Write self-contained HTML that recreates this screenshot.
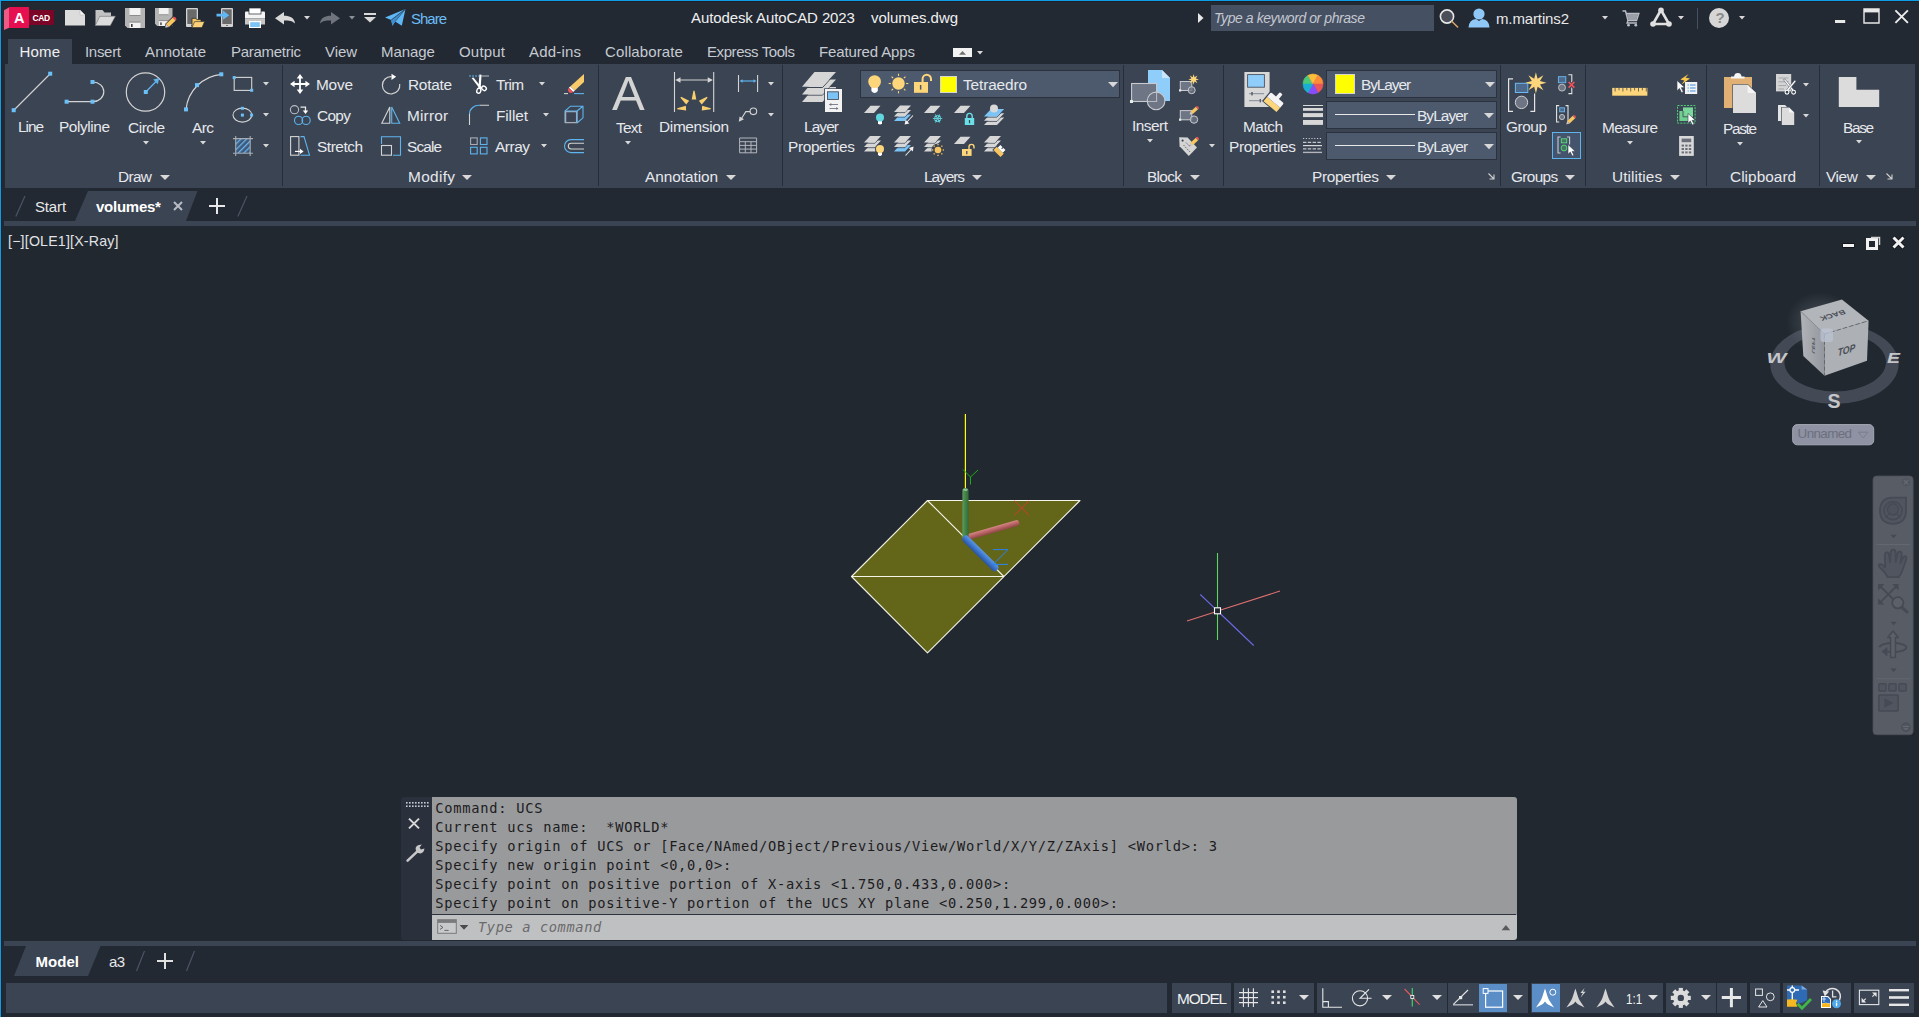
<!DOCTYPE html>
<html lang="en">
<head>
<meta charset="utf-8">
<title>Autodesk AutoCAD 2023 - volumes.dwg</title>
<style>
html,body{margin:0;padding:0;background:#222933;}
body{width:1919px;height:1017px;overflow:hidden;position:relative;font-family:"Liberation Sans",sans-serif;}
#app{position:absolute;left:0;top:0;width:1919px;height:1017px;overflow:hidden;background:#222933;}
.b{position:absolute;}
.t{position:absolute;white-space:pre;line-height:20px;font-family:"Liberation Sans",sans-serif;}
.m{font-family:"DejaVu Sans Mono","Liberation Mono",monospace;}
.i{position:absolute;overflow:visible;}
</style>
</head>
<body>
<div id="app">
<div class="b" style="left:2px;top:226px;width:1917px;height:715px;background:#212830;"></div>
<div class="b" style="left:0px;top:1px;width:1919px;height:1px;background:#1e2129;"></div>
<div class="b" style="left:1px;top:1px;width:1px;height:1016px;background:#1e2129;"></div>
<div class="b" style="left:0px;top:0px;width:1919px;height:1px;background:#0c9fe8;"></div>
<div class="b" style="left:0px;top:0px;width:1px;height:1017px;background:#0c9fe8;"></div>
<div class="b" style="left:8px;top:39px;width:64px;height:26px;background:#3b4453;"></div>
<div class="b" style="left:5px;top:64px;width:1910px;height:124px;background:#3b4453;"></div>
<div class="b" style="left:282px;top:65px;width:1px;height:121px;background:#262d38;"></div>
<div class="b" style="left:598px;top:65px;width:1px;height:121px;background:#262d38;"></div>
<div class="b" style="left:782px;top:65px;width:1px;height:121px;background:#262d38;"></div>
<div class="b" style="left:1123px;top:65px;width:1px;height:121px;background:#262d38;"></div>
<div class="b" style="left:1223px;top:65px;width:1px;height:121px;background:#262d38;"></div>
<div class="b" style="left:1500px;top:65px;width:1px;height:121px;background:#262d38;"></div>
<div class="b" style="left:1585px;top:65px;width:1px;height:121px;background:#262d38;"></div>
<div class="b" style="left:1706px;top:65px;width:1px;height:121px;background:#262d38;"></div>
<div class="b" style="left:1819px;top:65px;width:1px;height:121px;background:#262d38;"></div>
<div class="b" style="left:4px;top:221px;width:1912px;height:5px;background:#3b4453;"></div>
<svg class="i" style="left:0;top:191px" width="260" height="30"><path d="M88 0H197.5L186 30H75Z" fill="#3b4453"/><path d="M15.8 25.4L25 5M237.8 25.4L247 5" stroke="#4a5466" stroke-width="1.2" fill="none"/></svg>
<div class="b" style="left:4px;top:941px;width:1912px;height:5px;background:#3b4453;"></div>
<svg class="i" style="left:0;top:946px" width="260" height="30"><path d="M26 0H100.5L88 30H14Z" fill="#3b4453"/><path d="M136.5 25L144.5 5M186.5 25L194.5 5" stroke="#4a5466" stroke-width="1.2" fill="none"/></svg>
<div class="b" style="left:6px;top:983px;width:1161px;height:30px;background:#3b4453;"></div>
<div class="b" style="left:1172px;top:983px;width:59px;height:30px;background:#3b4453;"></div>
<div class="b" style="left:1234px;top:983px;width:80px;height:30px;background:#3b4453;"></div>
<div class="b" style="left:1317px;top:983px;width:130px;height:30px;background:#3b4453;"></div>
<div class="b" style="left:1448px;top:983px;width:80px;height:30px;background:#3b4453;"></div>
<div class="b" style="left:1531px;top:983px;width:132px;height:30px;background:#3b4453;"></div>
<div class="b" style="left:1666px;top:983px;width:50px;height:30px;background:#3b4453;"></div>
<div class="b" style="left:1717px;top:983px;width:30px;height:30px;background:#3b4453;"></div>
<div class="b" style="left:1750px;top:983px;width:30px;height:30px;background:#3b4453;"></div>
<div class="b" style="left:1783px;top:983px;width:68px;height:30px;background:#3b4453;"></div>
<div class="b" style="left:1854px;top:983px;width:60px;height:30px;background:#3b4453;"></div>
<div class="b" style="left:1479px;top:984px;width:28px;height:28px;background:#5b8ec6;"></div>
<div class="b" style="left:1532px;top:984px;width:28px;height:28px;background:#5b8ec6;"></div>
<span class="t" style="left:411.00px;top:8.80px;font-size:15px;color:#6cbcf5;letter-spacing:-1.000px;">Share</span>
<span class="t" style="left:691.00px;top:7.80px;font-size:15px;color:#f0f0f0;letter-spacing:-0.100px;">Autodesk AutoCAD 2023</span>
<span class="t" style="left:871.00px;top:7.80px;font-size:15px;color:#f0f0f0;letter-spacing:-0.050px;">volumes.dwg</span>
<div class="b" style="left:1211px;top:5px;width:223px;height:26px;background:#465063;"></div>
<span class="t" style="left:1214.00px;top:7.65px;font-size:14px;color:#c4c8cf;letter-spacing:-0.429px;font-style:italic;">Type a keyword or phrase</span>
<span class="t" style="left:1496.00px;top:8.80px;font-size:15px;color:#e8e8e8;letter-spacing:-0.125px;">m.martins2</span>
<div class="b" style="left:1697px;top:8px;width:1px;height:21px;background:#465063;"></div>
<svg class="i" style="left:0px;top:0px;" width="60" height="36" viewBox="0 0 60 36"><path d="M4 10.3L9 7.4V27.8L4 30Z" fill="#ec5b85"/><rect x="29" y="10" width="25" height="15" fill="#7a0526"/><rect x="9" y="7" width="20" height="21" fill="#e61050"/></svg>
<span class="t" style="left:14.00px;top:8.18px;font-size:14.5px;color:#ffffff;font-weight:700;">A</span>
<span class="t" style="left:32.50px;top:7.65px;font-size:8.5px;color:#ffffff;letter-spacing:-0.438px;font-weight:700;">CAD</span>
<svg class="i" style="left:65px;top:10px;" width="20" height="16" viewBox="0 0 20 16"><path d="M0 0H15L20 5V15.5H0Z" fill="#dcdcdc"/><path d="M15 0L20 5H15Z" fill="#f6f6f6"/><path d="M15 0V5H20" fill="none" stroke="#b8b8b8" stroke-width="0.6"/></svg>
<svg class="i" style="left:95px;top:9px;" width="21" height="17" viewBox="0 0 21 17"><path d="M0.5 16V1H7.5L9.5 3.5H16V7H5Z" fill="#c2c2c2"/><path d="M4.8 7.2H20.3L15.3 16.5H0.3Z" fill="#dcdcdc" stroke="#8a8a8a" stroke-width="0.5"/></svg>
<svg class="i" style="left:125px;top:8px;" width="20" height="20" viewBox="0 0 20 20"><g transform="translate(0,0) scale(1.0,1.0)"><path d="M0 0H20V20H2.5L0 17.5Z" fill="#b4b4b4"/><rect x="4.5" y="0" width="11" height="7.5" fill="#f2f2f2"/><rect x="4.5" y="7" width="11" height="1" fill="#8c8c8c"/><rect x="4.5" y="14.5" width="11" height="5.5" fill="#f2f2f2"/><rect x="4.5" y="13.5" width="11" height="1" fill="#8c8c8c"/><rect x="6" y="16" width="1.6" height="3" fill="#3a3a3a"/></g></svg>
<svg class="i" style="left:155px;top:8px;" width="21" height="21" viewBox="0 0 21 21"><g transform="translate(0,0) scale(0.875,0.9)"><path d="M0 0H20V20H2.5L0 17.5Z" fill="#b4b4b4"/><rect x="4.5" y="0" width="11" height="7.5" fill="#f2f2f2"/><rect x="4.5" y="7" width="11" height="1" fill="#8c8c8c"/><rect x="4.5" y="14.5" width="11" height="5.5" fill="#f2f2f2"/><rect x="4.5" y="13.5" width="11" height="1" fill="#8c8c8c"/><rect x="6" y="16" width="1.6" height="3" fill="#3a3a3a"/></g><path d="M9 21L10.6 15.6L18.6 7.6L23 12L15 20Z" fill="#222933"/><g transform="translate(10 19.8) rotate(-43.9)"><path d="M0 0L3.4 -2.1V2.1Z" fill="#c8c8c8"/><path d="M0 0L1.3 -0.6V0.6Z" fill="#555"/><rect x="3.4" y="-2.1" width="9.39" height="4.2" fill="#f7c661"/><path d="M12.79 -2.1H13.99Q15.59 0 13.99 2.1H12.79Z" fill="#f0525a"/></g></svg>
<svg class="i" style="left:185px;top:8px;" width="21" height="21" viewBox="0 0 21 21"><rect x="1" y="0" width="12" height="19" rx="1" fill="#d2d2d2"/><rect x="2.3" y="1.3" width="9.4" height="14.7" fill="#6a6a6a"/><rect x="6.0" y="17" width="2" height="1" fill="#7a7a7a"/><path d="M7 19.5V10.3H10.8L11.8 11.6H16V13.5" fill="#f7c661" stroke="#222933" stroke-width="0.8"/><path d="M9.6 13.6H19.6L17 19.6H7Z" fill="#fbd27a" stroke="#222933" stroke-width="0.6"/></svg>
<svg class="i" style="left:215px;top:8px;" width="21" height="21" viewBox="0 0 21 21"><rect x="6" y="0" width="12" height="19" rx="1" fill="#d2d2d2"/><rect x="7.3" y="1.3" width="9.4" height="14.7" fill="#6a6a6a"/><rect x="11.0" y="17" width="2" height="1" fill="#7a7a7a"/><path d="M1.5 5.8H8V2.6L14.2 7.2L8 11.8V8.6H1.5Z" fill="#5fb8f5"/></svg>
<svg class="i" style="left:245px;top:8px;" width="20" height="20" viewBox="0 0 20 20"><rect x="4" y="0" width="12" height="7" rx="0.8" fill="#ffffff"/><path d="M0 4.5Q0 3.5 1 3.5H19Q20 3.5 20 4.5V10.5H0Z" fill="#f4f4f4"/><rect x="4" y="0" width="12" height="6" fill="#ffffff" stroke="#222933" stroke-width="0.7"/><rect x="0" y="10.5" width="20" height="6" fill="#c6c6c6"/><rect x="4" y="13" width="12" height="7" fill="#ffffff"/><rect x="5.2" y="14.2" width="9.6" height="4.8" fill="#7cc4f5"/></svg>
<svg class="i" style="left:275px;top:12px;" width="20" height="13" viewBox="0 0 20 13"><path d="M0 6.2L9 0V3.8C15 3.8 19.5 6 20 11.6C17.5 8.6 14 8.4 9 8.4V12.4Z" fill="#d8d8d8"/></svg>
<svg class="i" style="left:304px;top:16px;" width="6" height="3.5" viewBox="0 0 6 3.5"><path d="M0 0H6L3.0 3.5Z" fill="#d8d8d8"/></svg>
<svg class="i" style="left:320px;top:12px;" width="20" height="13" viewBox="0 0 20 13"><path d="M0 6.2L9 0V3.8C15 3.8 19.5 6 20 11.6C17.5 8.6 14 8.4 9 8.4V12.4Z" fill="#6e737c" transform="translate(20,0) scale(-1,1)"/></svg>
<svg class="i" style="left:349px;top:16px;" width="6" height="3.5" viewBox="0 0 6 3.5"><path d="M0 0H6L3.0 3.5Z" fill="#8a8f98"/></svg>
<svg class="i" style="left:364px;top:13px;" width="12" height="10" viewBox="0 0 12 10"><rect x="0" y="0" width="12" height="2" fill="#d8d8d8"/><path d="M0 4H12L6 9.5Z" fill="#d8d8d8"/></svg>
<svg class="i" style="left:385px;top:9px;" width="21" height="18" viewBox="0 0 21 18"><path d="M0 8.6L20.5 0L16.8 16.8L10.2 12.6L7.4 16.8L6.2 11Z" fill="#5fb8f5"/><path d="M6.2 11L20.5 0L10.2 12.6L7.4 16.8Z" fill="#3f8fd0"/><path d="M6.2 11L20.5 0" stroke="#222933" stroke-width="0.7"/><path d="M10.2 12.6L20.5 0" stroke="#222933" stroke-width="0.5"/></svg>
<svg class="i" style="left:1198px;top:13px;" width="6" height="10" viewBox="0 0 6 10"><path d="M0 0L5.5 5L0 10Z" fill="#e8e8e8"/></svg>
<svg class="i" style="left:1439px;top:8px;" width="21" height="21" viewBox="0 0 21 21"><circle cx="8" cy="8.5" r="6.6" fill="#4a4f5a" stroke="#e6e6e6" stroke-width="1.6"/><path d="M13 13.5L18.6 19" stroke="#d9a066" stroke-width="1.6" stroke-linecap="round"/></svg>
<svg class="i" style="left:1468px;top:8px;" width="22" height="20" viewBox="0 0 22 20"><circle cx="11" cy="6" r="5.6" fill="#8fc8f7"/><path d="M0.5 19.5Q1 11.5 8 11L11 13L14 11Q21 11.5 21.5 19.5Z" fill="#8fc8f7"/></svg>
<svg class="i" style="left:1602px;top:16px;" width="6" height="3.5" viewBox="0 0 6 3.5"><path d="M0 0H6L3.0 3.5Z" fill="#d8d8d8"/></svg>
<svg class="i" style="left:1622px;top:10px;" width="18" height="17" viewBox="0 0 18 17"><path d="M0.5 1H3.5L6 10.5H14.5L16.8 3.5H4.3" fill="none" stroke="#b9bcc2" stroke-width="1.5"/><path d="M5 4H16L14.2 10H6.4Z" fill="#9a9ea6"/><path d="M6 10.5L5 13H15" fill="none" stroke="#b9bcc2" stroke-width="1.3"/><circle cx="6.5" cy="15.2" r="1.4" fill="#b9bcc2"/><circle cx="13.8" cy="15.2" r="1.4" fill="#b9bcc2"/></svg>
<svg class="i" style="left:1650px;top:7px;" width="22" height="20" viewBox="0 0 22 20"><path d="M11 3L3 17H19Z" fill="none" stroke="#e0e0e0" stroke-width="2.6" stroke-linejoin="round"/><circle cx="11" cy="3.2" r="2.8" fill="#e0e0e0"/><circle cx="3" cy="17" r="2.8" fill="#e0e0e0"/><circle cx="19" cy="17" r="2.8" fill="#e0e0e0"/></svg>
<svg class="i" style="left:1678px;top:16px;" width="6" height="3.5" viewBox="0 0 6 3.5"><path d="M0 0H6L3.0 3.5Z" fill="#d8d8d8"/></svg>
<svg class="i" style="left:1709px;top:8px;" width="20" height="20" viewBox="0 0 20 20"><circle cx="10" cy="10" r="10" fill="#d6d6d6"/></svg>
<span class="t" style="left:1715.50px;top:8.30px;font-size:15px;color:#8a8a8a;font-weight:700;">?</span>
<svg class="i" style="left:1739px;top:16px;" width="6" height="3.5" viewBox="0 0 6 3.5"><path d="M0 0H6L3.0 3.5Z" fill="#d8d8d8"/></svg>
<svg class="i" style="left:1835px;top:8px;" width="76" height="18" viewBox="0 0 76 18"><rect x="0" y="12" width="10.2" height="3" fill="#e8e8e8"/><path d="M29 1H44V15H29Z" fill="none" stroke="#e8e8e8" stroke-width="1.4"/><rect x="29" y="1" width="15" height="3.4" fill="#e8e8e8"/><path d="M60.4 2.3L72.9 14.9M72.9 2.3L60.4 14.9" stroke="#ececec" stroke-width="1.9" fill="none"/></svg>
<span class="t" style="left:19.50px;top:41.80px;font-size:15px;color:#f0f0f0;letter-spacing:0.167px;">Home</span>
<span class="t" style="left:85.00px;top:41.80px;font-size:15px;color:#c6cad1;letter-spacing:-0.300px;">Insert</span>
<span class="t" style="left:145.00px;top:41.80px;font-size:15px;color:#c6cad1;letter-spacing:0.143px;">Annotate</span>
<span class="t" style="left:231.00px;top:41.80px;font-size:15px;color:#c6cad1;letter-spacing:-0.278px;">Parametric</span>
<span class="t" style="left:325.00px;top:41.80px;font-size:15px;color:#c6cad1;letter-spacing:-0.083px;">View</span>
<span class="t" style="left:381.00px;top:41.80px;font-size:15px;color:#c6cad1;letter-spacing:-0.050px;">Manage</span>
<span class="t" style="left:459.00px;top:41.80px;font-size:15px;color:#c6cad1;letter-spacing:0.200px;">Output</span>
<span class="t" style="left:529.00px;top:41.80px;font-size:15px;color:#c6cad1;letter-spacing:0.188px;">Add-ins</span>
<span class="t" style="left:605.00px;top:41.80px;font-size:15px;color:#c6cad1;letter-spacing:0.125px;">Collaborate</span>
<span class="t" style="left:707.00px;top:41.80px;font-size:15px;color:#c6cad1;letter-spacing:-0.427px;">Express Tools</span>
<span class="t" style="left:819.00px;top:41.80px;font-size:15px;color:#c6cad1;letter-spacing:-0.135px;">Featured Apps</span>
<div class="b" style="left:953px;top:48px;width:19px;height:9px;background:#f2f2f2;"></div>
<svg class="i" style="left:959px;top:51px;" width="7" height="4" viewBox="0 0 7 4"><path d="M0 3.8H7L3.5 0Z" fill="#707070"/></svg>
<svg class="i" style="left:977px;top:51px;" width="6" height="3.5" viewBox="0 0 6 3.5"><path d="M0 0H6L3.0 3.5Z" fill="#d8d8d8"/></svg>
<span class="t" style="left:18.00px;top:116.66px;font-size:15.4px;color:#e6e8ec;letter-spacing:-1.042px;">Line</span>
<span class="t" style="left:59.00px;top:116.66px;font-size:15.4px;color:#e6e8ec;letter-spacing:-0.411px;">Polyline</span>
<span class="t" style="left:128.00px;top:117.66px;font-size:15.4px;color:#e6e8ec;letter-spacing:-0.450px;">Circle</span>
<span class="t" style="left:192.00px;top:117.66px;font-size:15.4px;color:#e6e8ec;letter-spacing:-0.562px;">Arc</span>
<span class="t" style="left:118.00px;top:166.66px;font-size:15.4px;color:#e6e8ec;letter-spacing:-0.667px;">Draw</span>
<span class="t" style="left:316.00px;top:74.66px;font-size:15.4px;color:#e6e8ec;letter-spacing:-0.208px;">Move</span>
<span class="t" style="left:317.00px;top:105.66px;font-size:15.4px;color:#e6e8ec;letter-spacing:-0.667px;">Copy</span>
<span class="t" style="left:317.00px;top:136.66px;font-size:15.4px;color:#e6e8ec;letter-spacing:-0.458px;">Stretch</span>
<span class="t" style="left:408.00px;top:74.66px;font-size:15.4px;color:#e6e8ec;letter-spacing:-0.250px;">Rotate</span>
<span class="t" style="left:407.00px;top:105.66px;font-size:15.4px;color:#e6e8ec;letter-spacing:0.175px;">Mirror</span>
<span class="t" style="left:407.00px;top:136.66px;font-size:15.4px;color:#e6e8ec;letter-spacing:-0.875px;">Scale</span>
<span class="t" style="left:496.00px;top:74.66px;font-size:15.4px;color:#e6e8ec;letter-spacing:-0.708px;">Trim</span>
<span class="t" style="left:496.00px;top:105.66px;font-size:15.4px;color:#e6e8ec;letter-spacing:-0.100px;">Fillet</span>
<span class="t" style="left:495.00px;top:136.66px;font-size:15.4px;color:#e6e8ec;letter-spacing:-0.438px;">Array</span>
<span class="t" style="left:408.00px;top:166.66px;font-size:15.4px;color:#e6e8ec;letter-spacing:0.325px;">Modify</span>
<span class="t" style="left:616.00px;top:117.66px;font-size:15.4px;color:#e6e8ec;letter-spacing:-0.750px;">Text</span>
<span class="t" style="left:659.00px;top:116.66px;font-size:15.4px;color:#e6e8ec;letter-spacing:-0.328px;">Dimension</span>
<span class="t" style="left:645.00px;top:166.66px;font-size:15.4px;color:#e6e8ec;letter-spacing:-0.056px;">Annotation</span>
<span class="t" style="left:804.00px;top:116.66px;font-size:15.4px;color:#e6e8ec;letter-spacing:-0.875px;">Layer</span>
<span class="t" style="left:788.00px;top:136.66px;font-size:15.4px;color:#e6e8ec;letter-spacing:-0.347px;">Properties</span>
<span class="t" style="left:924.00px;top:166.66px;font-size:15.4px;color:#e6e8ec;letter-spacing:-1.025px;">Layers</span>
<span class="t" style="left:1132.00px;top:115.66px;font-size:15.4px;color:#e6e8ec;letter-spacing:-0.500px;">Insert</span>
<span class="t" style="left:1147.00px;top:166.66px;font-size:15.4px;color:#e6e8ec;letter-spacing:-0.656px;">Block</span>
<span class="t" style="left:1243.00px;top:116.66px;font-size:15.4px;color:#e6e8ec;letter-spacing:-0.469px;">Match</span>
<span class="t" style="left:1229.00px;top:136.66px;font-size:15.4px;color:#e6e8ec;letter-spacing:-0.347px;">Properties</span>
<span class="t" style="left:1312.00px;top:166.66px;font-size:15.4px;color:#e6e8ec;letter-spacing:-0.347px;">Properties</span>
<span class="t" style="left:1506.00px;top:116.66px;font-size:15.4px;color:#e6e8ec;letter-spacing:-0.438px;">Group</span>
<span class="t" style="left:1511.00px;top:166.66px;font-size:15.4px;color:#e6e8ec;letter-spacing:-0.675px;">Groups</span>
<span class="t" style="left:1602.00px;top:117.66px;font-size:15.4px;color:#e6e8ec;letter-spacing:-0.646px;">Measure</span>
<span class="t" style="left:1612.00px;top:166.66px;font-size:15.4px;color:#e6e8ec;letter-spacing:0.062px;">Utilities</span>
<span class="t" style="left:1723.00px;top:118.66px;font-size:15.4px;color:#e6e8ec;letter-spacing:-1.344px;">Paste</span>
<span class="t" style="left:1730.00px;top:166.66px;font-size:15.4px;color:#e6e8ec;letter-spacing:0.031px;">Clipboard</span>
<span class="t" style="left:1843.00px;top:117.66px;font-size:15.4px;color:#e6e8ec;letter-spacing:-1.333px;">Base</span>
<span class="t" style="left:1826.00px;top:166.66px;font-size:15.4px;color:#e6e8ec;letter-spacing:-0.417px;">View</span>
<span class="t" style="left:612.00px;top:82.62px;font-size:49px;color:#d4d4d4;">A</span>
<svg class="i" style="left:143px;top:141px;" width="6" height="3.5" viewBox="0 0 6 3.5"><path d="M0 0H6L3.0 3.5Z" fill="#d8d8d8"/></svg>
<svg class="i" style="left:200px;top:141px;" width="6" height="3.5" viewBox="0 0 6 3.5"><path d="M0 0H6L3.0 3.5Z" fill="#d8d8d8"/></svg>
<svg class="i" style="left:625px;top:141px;" width="6" height="3.5" viewBox="0 0 6 3.5"><path d="M0 0H6L3.0 3.5Z" fill="#d8d8d8"/></svg>
<svg class="i" style="left:1147px;top:139px;" width="6" height="3.5" viewBox="0 0 6 3.5"><path d="M0 0H6L3.0 3.5Z" fill="#d8d8d8"/></svg>
<svg class="i" style="left:1627px;top:141px;" width="6" height="3.5" viewBox="0 0 6 3.5"><path d="M0 0H6L3.0 3.5Z" fill="#d8d8d8"/></svg>
<svg class="i" style="left:1737px;top:142px;" width="6" height="3.5" viewBox="0 0 6 3.5"><path d="M0 0H6L3.0 3.5Z" fill="#d8d8d8"/></svg>
<svg class="i" style="left:1856px;top:140px;" width="6" height="3.5" viewBox="0 0 6 3.5"><path d="M0 0H6L3.0 3.5Z" fill="#d8d8d8"/></svg>
<svg class="i" style="left:263px;top:82px;" width="6" height="3.5" viewBox="0 0 6 3.5"><path d="M0 0H6L3.0 3.5Z" fill="#d8d8d8"/></svg>
<svg class="i" style="left:263px;top:113px;" width="6" height="3.5" viewBox="0 0 6 3.5"><path d="M0 0H6L3.0 3.5Z" fill="#d8d8d8"/></svg>
<svg class="i" style="left:263px;top:144px;" width="6" height="3.5" viewBox="0 0 6 3.5"><path d="M0 0H6L3.0 3.5Z" fill="#d8d8d8"/></svg>
<svg class="i" style="left:539px;top:82px;" width="6" height="3.5" viewBox="0 0 6 3.5"><path d="M0 0H6L3.0 3.5Z" fill="#d8d8d8"/></svg>
<svg class="i" style="left:543px;top:113px;" width="6" height="3.5" viewBox="0 0 6 3.5"><path d="M0 0H6L3.0 3.5Z" fill="#d8d8d8"/></svg>
<svg class="i" style="left:541px;top:144px;" width="6" height="3.5" viewBox="0 0 6 3.5"><path d="M0 0H6L3.0 3.5Z" fill="#d8d8d8"/></svg>
<svg class="i" style="left:768px;top:82px;" width="6" height="3.5" viewBox="0 0 6 3.5"><path d="M0 0H6L3.0 3.5Z" fill="#d8d8d8"/></svg>
<svg class="i" style="left:768px;top:113px;" width="6" height="3.5" viewBox="0 0 6 3.5"><path d="M0 0H6L3.0 3.5Z" fill="#d8d8d8"/></svg>
<svg class="i" style="left:1209px;top:144px;" width="6" height="3.5" viewBox="0 0 6 3.5"><path d="M0 0H6L3.0 3.5Z" fill="#d8d8d8"/></svg>
<svg class="i" style="left:1803px;top:83px;" width="6" height="3.5" viewBox="0 0 6 3.5"><path d="M0 0H6L3.0 3.5Z" fill="#d8d8d8"/></svg>
<svg class="i" style="left:1803px;top:114px;" width="6" height="3.5" viewBox="0 0 6 3.5"><path d="M0 0H6L3.0 3.5Z" fill="#d8d8d8"/></svg>
<svg class="i" style="left:160px;top:175px;" width="10" height="5" viewBox="0 0 10 5"><path d="M0 0H10L5.0 5Z" fill="#d8d8d8"/></svg>
<svg class="i" style="left:462px;top:175px;" width="10" height="5" viewBox="0 0 10 5"><path d="M0 0H10L5.0 5Z" fill="#d8d8d8"/></svg>
<svg class="i" style="left:726px;top:175px;" width="10" height="5" viewBox="0 0 10 5"><path d="M0 0H10L5.0 5Z" fill="#d8d8d8"/></svg>
<svg class="i" style="left:972px;top:175px;" width="10" height="5" viewBox="0 0 10 5"><path d="M0 0H10L5.0 5Z" fill="#d8d8d8"/></svg>
<svg class="i" style="left:1190px;top:175px;" width="10" height="5" viewBox="0 0 10 5"><path d="M0 0H10L5.0 5Z" fill="#d8d8d8"/></svg>
<svg class="i" style="left:1386px;top:175px;" width="10" height="5" viewBox="0 0 10 5"><path d="M0 0H10L5.0 5Z" fill="#d8d8d8"/></svg>
<svg class="i" style="left:1565px;top:175px;" width="10" height="5" viewBox="0 0 10 5"><path d="M0 0H10L5.0 5Z" fill="#d8d8d8"/></svg>
<svg class="i" style="left:1670px;top:175px;" width="10" height="5" viewBox="0 0 10 5"><path d="M0 0H10L5.0 5Z" fill="#d8d8d8"/></svg>
<svg class="i" style="left:1866px;top:175px;" width="10" height="5" viewBox="0 0 10 5"><path d="M0 0H10L5.0 5Z" fill="#d8d8d8"/></svg>
<svg class="i" style="left:1488px;top:173px;" width="7" height="7" viewBox="0 0 7 7"><path d="M0.5 0.5L5.5 5.5M1.5 6H6V1.5" stroke="#d0d0d0" stroke-width="1.1" fill="none"/></svg>
<svg class="i" style="left:1886px;top:173px;" width="7" height="7" viewBox="0 0 7 7"><path d="M0.5 0.5L5.5 5.5M1.5 6H6V1.5" stroke="#d0d0d0" stroke-width="1.1" fill="none"/></svg>
<div class="b" style="left:860px;top:70px;width:260px;height:28px;background:#4d5a6e;box-shadow:inset 0 0 0 1px #2b323e;"></div>
<div class="b" style="left:940px;top:76px;width:17px;height:17px;background:#ffff00;box-shadow:inset 0 0 0 1px #d8d8c8;"></div>
<span class="t" style="left:963.00px;top:74.66px;font-size:15.4px;color:#e6e8ec;letter-spacing:-0.125px;">Tetraedro</span>
<svg class="i" style="left:1108px;top:82px;" width="10" height="5.2" viewBox="0 0 10 5.2"><path d="M0 0H10L5.0 5.2Z" fill="#d8d8d8"/></svg>
<div class="b" style="left:1326px;top:70px;width:171px;height:28px;background:#4d5a6e;box-shadow:inset 0 0 0 1px #2b323e;"></div>
<svg class="i" style="left:1485px;top:82px;" width="10" height="5.2" viewBox="0 0 10 5.2"><path d="M0 0H10L5.0 5.2Z" fill="#d8d8d8"/></svg>
<div class="b" style="left:1326px;top:101px;width:171px;height:28px;background:#4d5a6e;box-shadow:inset 0 0 0 1px #2b323e;"></div>
<svg class="i" style="left:1484px;top:113px;" width="10" height="5.2" viewBox="0 0 10 5.2"><path d="M0 0H10L5.0 5.2Z" fill="#d8d8d8"/></svg>
<div class="b" style="left:1326px;top:132px;width:171px;height:28px;background:#4d5a6e;box-shadow:inset 0 0 0 1px #2b323e;"></div>
<svg class="i" style="left:1484px;top:144px;" width="10" height="5.2" viewBox="0 0 10 5.2"><path d="M0 0H10L5.0 5.2Z" fill="#d8d8d8"/></svg>
<div class="b" style="left:1335px;top:74px;width:20px;height:20px;background:#ffff00;box-shadow:inset 0 0 0 1px #d8d8c8;"></div>
<span class="t" style="left:1361.00px;top:74.66px;font-size:15.4px;color:#e6e8ec;letter-spacing:-1.062px;">ByLayer</span>
<div class="b" style="left:1335px;top:114px;width:80px;height:1px;background:#e8e8e8;"></div>
<span class="t" style="left:1417.00px;top:105.66px;font-size:15.4px;color:#e6e8ec;letter-spacing:-0.896px;">ByLayer</span>
<div class="b" style="left:1335px;top:145px;width:80px;height:1px;background:#e8e8e8;"></div>
<span class="t" style="left:1417.00px;top:136.66px;font-size:15.4px;color:#e6e8ec;letter-spacing:-0.896px;">ByLayer</span>
<div class="b" style="left:1552px;top:132px;width:29px;height:27px;background:#44546c;box-shadow:inset 0 0 0 1px #5fb4ee;"></div>
<svg class="i" style="left:0;top:64px" width="1919" height="124" viewBox="0 64 1919 124"><path d="M14 110L50 74" stroke="#d4d4d4" stroke-width="1.1"/><rect x="11.7" y="108.2" width="4" height="4" fill="#6cc0f8"/><rect x="48.2" y="71.7" width="4" height="4" fill="#6cc0f8"/><path d="M66.5 101.7H92.5M93 82A10.8 9.85 0 0 1 93 101.7" fill="none" stroke="#d4d4d4" stroke-width="1.2"/><rect x="64.6" y="99.7" width="4" height="4" fill="#6cc0f8"/><rect x="90.5" y="99.7" width="4" height="4" fill="#6cc0f8"/><rect x="90.5" y="80.0" width="4" height="4" fill="#6cc0f8"/><circle cx="145.5" cy="92" r="19.2" fill="none" stroke="#d4d4d4" stroke-width="1.2"/><path d="M146 91.8L156.5 81" stroke="#5fb4ee" stroke-width="1.3"/><path d="M159.2 78L157.8 84.2L153.2 79.6Z" fill="#5fb4ee"/><rect x="143.8" y="90.0" width="4" height="4" fill="#6cc0f8"/><path d="M186 109.4A39.2 39.2 0 0 1 221.3 74.3" fill="none" stroke="#d4d4d4" stroke-width="1.2"/><rect x="184.0" y="107.4" width="4" height="4" fill="#6cc0f8"/><rect x="195.0" y="83.1" width="4" height="4" fill="#6cc0f8"/><rect x="219.3" y="72.3" width="4" height="4" fill="#6cc0f8"/><rect x="234.2" y="77.4" width="17.5" height="13" fill="none" stroke="#d4d4d4" stroke-width="1.1"/><rect x="232.7" y="76.1" width="3" height="3" fill="#6cc0f8"/><rect x="250.2" y="88.8" width="3" height="3" fill="#6cc0f8"/><ellipse cx="242.4" cy="115.1" rx="9.4" ry="7" fill="none" stroke="#d4d4d4" stroke-width="1.1"/><rect x="240.9" y="106.8" width="3" height="3" fill="#6cc0f8"/><rect x="240.9" y="113.6" width="3" height="3" fill="#6cc0f8"/><rect x="250.1" y="113.6" width="3" height="3" fill="#6cc0f8"/><defs><pattern id="hat" width="4" height="4" patternUnits="userSpaceOnUse" patternTransform="rotate(-45)"><rect width="4" height="4" fill="#3d5878"/><rect width="4" height="1.3" fill="#6cb4ec"/></pattern></defs><rect x="236" y="139" width="14" height="14" fill="url(#hat)"/><path d="M235.7 136V156M250.2 136V156M233 138.6H253M233 153.2H253" stroke="#a8acb4" stroke-width="1.1" fill="none"/><path d="M300 74L303.3 78.6H300.9V83.1H305.4V80.7L310 84L305.4 87.3V84.9H300.9V89.4H303.3L300 94L296.7 89.4H299.1V84.9H294.6V87.3L290 84L294.6 80.7V83.1H299.1V78.6H296.7Z" fill="#ffffff"/><circle cx="294.5" cy="109.7" r="4.1" fill="none" stroke="#b8bcc4" stroke-width="1.1"/><path d="M300.5 107.2H305.5V111" fill="none" stroke="#e8e8e8" stroke-width="1.3"/><path d="M302.8 110.5H308.2L305.5 114Z" fill="#ffffff"/><circle cx="298.6" cy="120.4" r="4.1" fill="none" stroke="#5fb4ee" stroke-width="1.1"/><circle cx="306.1" cy="120.4" r="4.1" fill="none" stroke="#5fb4ee" stroke-width="1.1"/><path d="M300.5 136.6H304L309.5 155.2H300.5" fill="none" stroke="#5fb4ee" stroke-width="1.1"/><rect x="290.6" y="136.6" width="8.3" height="18.6" fill="none" stroke="#d4d4d4" stroke-width="1.1"/><path d="M295 151.4H301" stroke="#ffffff" stroke-width="1.2"/><path d="M300 148.8L303.6 151.4L300 154Z" fill="#ffffff"/><path d="M391.5 76.6A8.7 8.7 0 1 0 399.7 84" fill="none" stroke="#d4d4d4" stroke-width="1.2"/><path d="M391.5 73.8L396.2 76.8L391.5 80Z" fill="#ffffff"/><path d="M389.8 107V123.3H381.8Z" fill="none" stroke="#d4d4d4" stroke-width="1.1"/><path d="M391.7 107V123.3H399.7Z" fill="none" stroke="#5fb4ee" stroke-width="1.1"/><path d="M381.5 144V136.7H400.5V155.2H393" fill="none" stroke="#5fb4ee" stroke-width="1.1"/><rect x="381.5" y="145.5" width="10" height="9.7" fill="none" stroke="#d4d4d4" stroke-width="1.1"/><path d="M469 76H479" stroke="#5fb4ee" stroke-width="1.2" stroke-dasharray="2 1"/><path d="M482 76H489" stroke="#a8acb4" stroke-width="1.2"/><path d="M471.6 78L473.5 77.4L481.6 87.4L479.8 88.8Z" fill="#ffffff"/><path d="M479.4 74.6L481.6 74.8L480.6 88.6L478.4 88.6Z" fill="#ffffff"/><ellipse cx="478.8" cy="90.8" rx="2" ry="2.5" fill="none" stroke="#ffffff" stroke-width="1.4" transform="rotate(20 478.8 90.8)"/><ellipse cx="484" cy="88.3" rx="2" ry="2.5" fill="none" stroke="#ffffff" stroke-width="1.4" transform="rotate(-50 484 88.3)"/><path d="M469.5 114A9.5 8.7 0 0 1 480 105.3" fill="none" stroke="#5fb4ee" stroke-width="1.1"/><path d="M469.5 114V125M480 105.3H489" fill="none" stroke="#d4d4d4" stroke-width="1.1"/><rect x="470.6" y="137.9" width="6.6" height="6.6" fill="none" stroke="#a8acb4" stroke-width="1.1"/><rect x="480.4" y="137.9" width="6.6" height="6.6" fill="none" stroke="#5fb4ee" stroke-width="1.1"/><rect x="470.6" y="147.3" width="6.6" height="6.6" fill="none" stroke="#5fb4ee" stroke-width="1.1"/><rect x="480.4" y="147.3" width="6.6" height="6.6" fill="none" stroke="#5fb4ee" stroke-width="1.1"/><path d="M584 74V82L574.8 90.6L570.2 86.4Z" fill="#f7cb6a"/><path d="M570.2 86.4L574.8 90.6L573.2 92L568.8 87.8Z" fill="#ffffff"/><path d="M568.8 87.8L573.2 92Q570.8 93.8 568.8 92Q567 90 568.8 87.8Z" fill="#f0525a"/><path d="M564 93.6H568" stroke="#d4d4d4" stroke-width="1.1"/><path d="M574 93.6H584" stroke="#5fb4ee" stroke-width="1.1"/><path d="M565 123V111L570.5 106.2H583V117.8L577 123M577 111L583 106.2" fill="none" stroke="#5fb4ee" stroke-width="1.1"/><rect x="565.6" y="111.6" width="11" height="11" fill="none" stroke="#a8acb4" stroke-width="1.3"/><path d="M565 111H577.3V123" fill="none" stroke="#5fb4ee" stroke-width="0.9"/><path d="M584 139.6H571A6.5 6.5 0 0 0 571 152.6H584" fill="none" stroke="#5fb4ee" stroke-width="1.1"/><path d="M584 143.2H571.2A2.9 2.9 0 0 0 571.2 149H584" fill="none" stroke="#d4d4d4" stroke-width="1.1"/><path d="M674.5 72V112M713.7 72V112M677 80H711" stroke="#d4d4d4" stroke-width="1.1" fill="none"/><path d="M675.3 80L680.5 77.2V82.8ZM712.9 80L707.7 77.2V82.8Z" fill="#d4d4d4"/><path d="M8 -2.3L16.8 -0.6V0.6L8 2.3Z" fill="#f7cf6e" transform="translate(694 107.6) rotate(-90)"/><path d="M8 -2.3L16.8 -0.6V0.6L8 2.3Z" fill="#f7cf6e" transform="translate(694 107.6) rotate(-142)"/><path d="M8 -2.3L16.8 -0.6V0.6L8 2.3Z" fill="#f7cf6e" transform="translate(694 107.6) rotate(-38)"/><path d="M8 -2.3L16.8 -0.6V0.6L8 2.3Z" fill="#f7cf6e" transform="translate(694 107.6) rotate(-184)"/><path d="M8 -2.3L16.8 -0.6V0.6L8 2.3Z" fill="#f7cf6e" transform="translate(694 107.6) rotate(4)"/><path d="M738.5 75V92M757.6 75V92" stroke="#d4d4d4" stroke-width="1.1"/><path d="M741 81H755" stroke="#5fb4ee" stroke-width="1.2"/><path d="M739.6 81L742.6 79.3V82.7ZM756.5 81L753.5 79.3V82.7Z" fill="#5fb4ee"/><circle cx="753.4" cy="111.3" r="3.3" fill="none" stroke="#d4d4d4" stroke-width="1.1"/><path d="M750 111.6H745.8L741.5 118.5" fill="none" stroke="#d4d4d4" stroke-width="1.1"/><path d="M738.8 121.8L739.6 116.4L744 119.2Z" fill="#d4d4d4"/><path d="M739.6 138H756.6V152.8H739.6ZM739.6 141.7H756.6M739.6 145.4H756.6M739.6 149.1H756.6M745.3 141.7V152.8M751 141.7V152.8" fill="none" stroke="#b4b6bb" stroke-width="1"/><path d="M814.5 87.2H836L822.5 102.0H802Z" fill="#d6d6d6"/><path d="M802 95.10000000000001H822.5L836 80.30000000000001" stroke="#3b4453" stroke-width="1" fill="none"/><path d="M814.5 79.6H836L822.5 94.39999999999999H802Z" fill="#d6d6d6"/><path d="M802 87.5H822.5L836 72.7" stroke="#3b4453" stroke-width="1" fill="none"/><path d="M814.5 72.0H836L822.5 86.8H802Z" fill="#d6d6d6"/><rect x="829.5" y="87.2" width="6.5" height="3" fill="#e0e0e0"/><rect x="824.2" y="88.3" width="18.6" height="24.4" fill="#3b4453"/><rect x="825" y="89" width="17" height="23" fill="#f2f2f2"/><rect x="827.6" y="91.8" width="11" height="7.6" fill="#7cc4f5" stroke="#3a4250" stroke-width="0.8"/><path d="M829.5 104.5H838M829.5 108.5H838" stroke="#707682" stroke-width="0.9"/><path d="M829 104.5L831.3 103V106ZM838.5 108.5L836.2 107V110Z" fill="#707682"/><path d="M871.4 86.72H877.8000000000001V90.88Q874.6 95.03999999999999 871.4 90.88Z" fill="#ffffff"/><circle cx="874.6" cy="81.6" r="6.4" fill="#fdd57a"/><circle cx="898.5" cy="83.5" r="6.2" fill="#fdd57a"/><path d="M906.10 83.50L908.30 83.50" stroke="#fdd57a" stroke-width="1.1"/><path d="M903.87 88.87L905.43 90.43" stroke="#fdd57a" stroke-width="1.1"/><path d="M898.50 91.10L898.50 93.30" stroke="#fdd57a" stroke-width="1.1"/><path d="M893.13 88.87L891.57 90.43" stroke="#fdd57a" stroke-width="1.1"/><path d="M890.90 83.50L888.70 83.50" stroke="#fdd57a" stroke-width="1.1"/><path d="M893.13 78.13L891.57 76.57" stroke="#fdd57a" stroke-width="1.1"/><path d="M898.50 75.90L898.50 73.70" stroke="#fdd57a" stroke-width="1.1"/><path d="M903.87 78.13L905.43 76.57" stroke="#fdd57a" stroke-width="1.1"/><path d="M922.6 82.5V79A4.2 4.2 0 0 1 931 79V81" fill="none" stroke="#fdd57a" stroke-width="2"/><rect x="914" y="82" width="14" height="10.8" fill="#fdd57a"/><rect x="919.9" y="85" width="1.5" height="4.6" fill="#4c586d"/><path d="M870.5 105.8H880.5L874 113.0H864Z" fill="#d6d6d6"/><path d="M878.0 120.7H882.0V123.3Q880 125.9 878.0 123.3Z" fill="#ffffff"/><circle cx="880" cy="117.5" r="4" fill="#62d6df"/><path d="M900 114.4H911L905 121.0H894Z" fill="#7cc4f5"/><path d="M894 117.1H905L911 110.5" stroke="#3b4453" stroke-width="0.8" fill="none"/><path d="M900 109.9H911L905 116.5H894Z" fill="#d6d6d6"/><path d="M894 112.6H905L911 106.0" stroke="#3b4453" stroke-width="0.8" fill="none"/><path d="M900 105.4H911L905 112.0H894Z" fill="#d6d6d6"/><path d="M913 115.5L906.5 122.5" stroke="#e8e8e8" stroke-width="1.1"/><path d="M904.6 124.6L905.6 119.8L909.4 123.4Z" fill="#f2f2f2"/><path d="M930.5 105.8H940.5L934 113.0H924Z" fill="#d6d6d6"/><path d="M-4.6 0H4.6M-3.2 -1.6L-2 0L-3.2 1.6M3.2 -1.6L2 0L3.2 1.6" stroke="#62d6df" stroke-width="0.9" fill="none" transform="translate(937.6 118.5) rotate(0)"/><path d="M-4.6 0H4.6M-3.2 -1.6L-2 0L-3.2 1.6M3.2 -1.6L2 0L3.2 1.6" stroke="#62d6df" stroke-width="0.9" fill="none" transform="translate(937.6 118.5) rotate(60)"/><path d="M-4.6 0H4.6M-3.2 -1.6L-2 0L-3.2 1.6M3.2 -1.6L2 0L3.2 1.6" stroke="#62d6df" stroke-width="0.9" fill="none" transform="translate(937.6 118.5) rotate(120)"/><path d="M960.5 105.8H970.5L964 113.0H954Z" fill="#d6d6d6"/><path d="M966.8 118.3V116.2A2.7 2.8 0 0 1 972.1999999999999 116.2V118.3" fill="none" stroke="#6adfe8" stroke-width="1.4"/><rect x="964.8" y="118" width="9.4" height="7" fill="#6adfe8"/><rect x="968.9" y="120" width="1.2" height="3.2" fill="#3b4453"/><path d="M991 117.4H1004.2L997 124.9H984Z" fill="#d6d6d6"/><path d="M984 121.3H997L1004.2 113.8" stroke="#3b4453" stroke-width="0.9" fill="none"/><path d="M991 113.2H1004.2L997 120.7H984Z" fill="#d6d6d6"/><path d="M984 117.1H997L1004.2 109.6" stroke="#3b4453" stroke-width="0.9" fill="none"/><path d="M991 109H1004.2L997 116.5H984Z" fill="#7cc4f5"/><circle cx="994" cy="108.6" r="4" fill="#d8d8d8"/><path d="M870 145.0H881L875 151.6H864Z" fill="#d6d6d6"/><path d="M864 147.7H875L881 141.1" stroke="#3b4453" stroke-width="0.8" fill="none"/><path d="M870 140.5H881L875 147.1H864Z" fill="#d6d6d6"/><path d="M864 143.2H875L881 136.6" stroke="#3b4453" stroke-width="0.8" fill="none"/><path d="M870 136H881L875 142.6H864Z" fill="#d6d6d6"/><circle cx="880" cy="149" r="5" fill="#3b4453"/><path d="M878.0 152.2H882.0V154.8Q880 157.4 878.0 154.8Z" fill="#ffffff"/><circle cx="880" cy="149" r="4" fill="#fdd57a"/><path d="M900 145.0H911L905 151.6H894Z" fill="#7cc4f5"/><path d="M894 147.7H905L911 141.1" stroke="#3b4453" stroke-width="0.8" fill="none"/><path d="M900 140.5H911L905 147.1H894Z" fill="#d6d6d6"/><path d="M894 143.2H905L911 136.6" stroke="#3b4453" stroke-width="0.8" fill="none"/><path d="M900 136H911L905 142.6H894Z" fill="#d6d6d6"/><path d="M905.5 155.5L911.5 149" stroke="#e8e8e8" stroke-width="1.1"/><path d="M913.6 146.6L912.8 151.6L908.8 148Z" fill="#f2f2f2"/><path d="M930 145.0H941L935 151.6H924Z" fill="#d6d6d6"/><path d="M924 147.7H935L941 141.1" stroke="#3b4453" stroke-width="0.8" fill="none"/><path d="M930 140.5H941L935 147.1H924Z" fill="#d6d6d6"/><path d="M924 143.2H935L941 136.6" stroke="#3b4453" stroke-width="0.8" fill="none"/><path d="M930 136H941L935 142.6H924Z" fill="#d6d6d6"/><circle cx="938" cy="150" r="6.6" fill="#3b4453"/><circle cx="938" cy="150" r="3.3" fill="#f7c661"/><rect x="942.75" y="149.35" width="1.3" height="1.3" fill="#f7c661"/><rect x="941.17" y="153.17" width="1.3" height="1.3" fill="#f7c661"/><rect x="937.35" y="154.75" width="1.3" height="1.3" fill="#f7c661"/><rect x="933.53" y="153.17" width="1.3" height="1.3" fill="#f7c661"/><rect x="931.95" y="149.35" width="1.3" height="1.3" fill="#f7c661"/><rect x="933.53" y="145.53" width="1.3" height="1.3" fill="#f7c661"/><rect x="937.35" y="143.95" width="1.3" height="1.3" fill="#f7c661"/><rect x="941.17" y="145.53" width="1.3" height="1.3" fill="#f7c661"/><path d="M960.5 136.8H970.5L964 144.0H954Z" fill="#d6d6d6"/><path d="M969.0 149.3V147A2.5 2.6 0 0 1 974.0 147V148.4" fill="none" stroke="#fdd57a" stroke-width="1.4"/><rect x="962" y="149" width="9.6" height="6.9" fill="#fdd57a"/><rect x="966.1999999999999" y="151" width="1.2" height="3.2" fill="#3b4453"/><path d="M990 145.0H1001L995 151.6H984Z" fill="#d6d6d6"/><path d="M984 147.7H995L1001 141.1" stroke="#3b4453" stroke-width="0.8" fill="none"/><path d="M990 140.5H1001L995 147.1H984Z" fill="#d6d6d6"/><path d="M984 143.2H995L1001 136.6" stroke="#3b4453" stroke-width="0.8" fill="none"/><path d="M990 136H1001L995 142.6H984Z" fill="#d6d6d6"/><g transform="translate(998.8 151.6) rotate(-45)"><rect x="-3.4" y="-5.8" width="10" height="11.6" fill="#3b4453"/><rect x="-2.6" y="-5" width="4.6" height="10" fill="#f7c661"/><rect x="2" y="-3.6" width="3.8" height="7.2" fill="#ffffff"/><rect x="4" y="-0.5" width="2" height="1" fill="#3b4453"/></g><path d="M1148 70H1162L1170 78V101H1148Z" fill="#8fcdfa"/><path d="M1162 70L1170 78H1162Z" fill="#c9e6fc"/><rect x="1131.6" y="83.5" width="25" height="18" fill="#6e7585" stroke="#c8cacf" stroke-width="1.1"/><circle cx="1156.1" cy="100.9" r="8.8" fill="#6e7585" stroke="#c8cacf" stroke-width="1.1"/><path d="M1156.6 92.5V101.5H1147.5" fill="none" stroke="#c8cacf" stroke-width="1.1" opacity="0.8"/><rect x="1130" y="100" width="3" height="3" fill="#e8e8e8"/><rect x="1180.3" y="81.5" width="11.5" height="9" fill="#6e7585" stroke="#c8cacf" stroke-width="1"/><circle cx="1191.7" cy="90.2" r="3.5" fill="#6e7585" fill-opacity="0.8" stroke="#c8cacf" stroke-width="1"/><rect x="1179" y="89.3" width="2.2" height="2.2" fill="#e8e8e8"/><path d="M1193.60 74.00L1194.52 77.18L1197.42 75.58L1195.82 78.48L1199.00 79.40L1195.82 80.32L1197.42 83.22L1194.52 81.62L1193.60 84.80L1192.68 81.62L1189.78 83.22L1191.38 80.32L1188.20 79.40L1191.38 78.48L1189.78 75.58L1192.68 77.18Z" fill="#fdd57a"/><rect x="1180.3" y="110.6" width="11.5" height="9.2" fill="#6e7585" stroke="#c8cacf" stroke-width="1"/><circle cx="1194" cy="119.6" r="3.7" fill="#6e7585" fill-opacity="0.8" stroke="#c8cacf" stroke-width="1"/><rect x="1179" y="118.6" width="2.2" height="2.2" fill="#e8e8e8"/><g transform="translate(1189.2 115) rotate(-41.8)"><path d="M0 0L3.4 -1.7V1.7Z" fill="#c8c8c8"/><path d="M0 0L1.3 -0.6V0.6Z" fill="#555"/><rect x="3.4" y="-1.7" width="7.01" height="3.4" fill="#f7c661"/><path d="M10.41 -1.7H11.61Q13.21 0 11.61 1.7H10.41Z" fill="#f0525a"/></g><path d="M1179.2 137.2L1187.6 137.6L1197 147.4L1188.8 156L1179.6 146.2Z" fill="#d4d4d4"/><circle cx="1182.6" cy="140.6" r="1.1" fill="#3b4453"/><path d="M1183.5 145L1190 152M1186 142.5L1189 145.7" stroke="#5a6170" stroke-width="0.9" stroke-dasharray="1.6 1"/><g transform="translate(1189.2 146.4) rotate(-43.8)"><path d="M0 0L3.4 -1.7V1.7Z" fill="#c8c8c8"/><path d="M0 0L1.3 -0.6V0.6Z" fill="#555"/><rect x="3.4" y="-1.7" width="7.41" height="3.4" fill="#f7c661"/><path d="M10.81 -1.7H12.01Q13.61 0 12.01 1.7H10.81Z" fill="#f0525a"/></g><rect x="1244.4" y="72" width="25.2" height="35" fill="#d8d8d8"/><rect x="1247.6" y="74.6" width="16.8" height="12.6" fill="#8fcdfa" stroke="#4a5262" stroke-width="0.9"/><path d="M1249 93.7H1264M1249 100.7H1261.5" stroke="#7a808c" stroke-width="0.9"/><rect x="1251.2" y="92" width="1.6" height="3.4" fill="#5a6170"/><rect x="1259.6" y="99" width="1.4" height="3.4" fill="#5a6170"/><g transform="translate(1273.2 102.8) rotate(40) scale(1.18)"><rect x="-8.2" y="-6.6" width="16.4" height="11.6" fill="#3b4453"/><rect x="-7.2" y="-0.6" width="14.4" height="4.8" fill="#fdd57a"/><path d="M-7.2 -0.6V-4.2Q-7.2 -5.6 -5.8 -5.6H-1.6V-9.6Q-1.6 -10.6 -0.6 -10.6H0.6Q1.6 -10.6 1.6 -9.6V-5.6H5.8Q7.2 -5.6 7.2 -4.2V-0.6Z" fill="#f4f4f4"/></g><path d="M1313 84L1303.00 84.00A10 10 0 0 1 1308.00 75.34Z" fill="#4cc87a" stroke="#4cc87a" stroke-width="0.5"/><path d="M1313 84L1308.00 75.34A10 10 0 0 1 1318.00 75.34Z" fill="#fdbc3a" stroke="#fdbc3a" stroke-width="0.5"/><path d="M1313 84L1318.00 75.34A10 10 0 0 1 1323.00 84.00Z" fill="#fd8c3a" stroke="#fd8c3a" stroke-width="0.5"/><path d="M1313 84L1323.00 84.00A10 10 0 0 1 1318.00 92.66Z" fill="#e8555a" stroke="#e8555a" stroke-width="0.5"/><path d="M1313 84L1318.00 92.66A10 10 0 0 1 1308.00 92.66Z" fill="#8a4dfd" stroke="#8a4dfd" stroke-width="0.5"/><path d="M1313 84L1308.00 92.66A10 10 0 0 1 1303.00 84.00Z" fill="#1aaed0" stroke="#1aaed0" stroke-width="0.5"/><path d="M1303 105.5H1323" stroke="#d8d8d8" stroke-width="1"/><rect x="1303" y="108" width="20" height="2.8" fill="#d8d8d8"/><rect x="1303" y="113.1" width="20" height="4" fill="#d8d8d8"/><rect x="1303" y="120" width="20" height="4.9" fill="#d8d8d8"/><path d="M1303 138.5H1322" stroke="#c4c6cb" stroke-width="1" stroke-dasharray="1.2 1.6"/><path d="M1303 142.3H1322" stroke="#c4c6cb" stroke-width="1.2" stroke-dasharray="3.4 1.4"/><path d="M1303 145.6H1322" stroke="#d8d8d8" stroke-width="1.2"/><path d="M1303 148.8H1322" stroke="#c4c6cb" stroke-width="1.2" stroke-dasharray="3.4 1.4"/><path d="M1303 152.4H1322" stroke="#b4b6bb" stroke-width="1.4"/><path d="M1513 78.8H1508.6V111.4H1513M1530.4 111.4H1534.6V93.5" fill="none" stroke="#e4e4e4" stroke-width="1.2"/><rect x="1515.4" y="83.3" width="12.4" height="9.2" fill="#4d6a8c" stroke="#6cb8f0" stroke-width="1"/><circle cx="1521.5" cy="102.4" r="6.2" fill="#6e7585" stroke="#d0d0d0" stroke-width="1"/><path d="M1535.90 72.20L1537.58 78.73L1543.40 75.30L1539.97 81.12L1546.50 82.80L1539.97 84.48L1543.40 90.30L1537.58 86.87L1535.90 93.40L1534.22 86.87L1528.40 90.30L1531.83 84.48L1525.30 82.80L1531.83 81.12L1528.40 75.30L1534.22 78.73Z" fill="#fdd57a"/><rect x="1558.4" y="76.7" width="7.4" height="6" fill="#4d6a8c" stroke="#6cb8f0" stroke-width="0.9"/><circle cx="1562" cy="87.6" r="3.5" fill="#6e7585" stroke="#c8c8c8" stroke-width="0.9"/><path d="M1568.4 74.7H1571.8V93.6H1568.4" fill="none" stroke="#e4e4e4" stroke-width="1.1"/><path d="M1568 81.5L1575 88.2M1575 81.5L1568 88.2" stroke="#3b4453" stroke-width="3.4"/><path d="M1568.6 82L1574.4 87.7M1574.4 82L1568.6 87.7" stroke="#f0525a" stroke-width="1.7"/><path d="M1559.2 105.6H1556.6V122H1559.2M1565.6 105.6H1568V122" fill="none" stroke="#e4e4e4" stroke-width="1.1"/><rect x="1559.7" y="107.8" width="4.8" height="4" fill="#4d6a8c" stroke="#6cb8f0" stroke-width="0.9"/><circle cx="1562" cy="117" r="2.6" fill="#6e7585" stroke="#c8c8c8" stroke-width="0.9"/><g transform="translate(1566 124.6) rotate(-43.2)"><path d="M0 0L3.4 -1.7V1.7Z" fill="#c8c8c8"/><path d="M0 0L1.3 -0.6V0.6Z" fill="#555"/><rect x="3.4" y="-1.7" width="7.56" height="3.4" fill="#f7c661"/><path d="M10.96 -1.7H12.16Q13.76 0 12.16 1.7H10.96Z" fill="#f0525a"/></g><path d="M1560.6 137H1558V153H1560.6M1567 137H1569.6V144.5" fill="none" stroke="#c8cacf" stroke-width="1.1"/><rect x="1561.3" y="138.8" width="5.4" height="4" fill="#3f7a5c" stroke="#5fd87c" stroke-width="0.9"/><circle cx="1564" cy="148" r="2.9" fill="#3f7a5c" stroke="#5fd87c" stroke-width="0.9"/><path transform="translate(1568 144.6) scale(0.86)" d="M0 0V11.2L2.7 8.7L4.9 13.3L6.9 12.3L4.7 7.9L8.3 7.7Z" fill="#ffffff" stroke="#3b4453" stroke-width="0.7"/><rect x="1612.2" y="87.9" width="35.2" height="7.8" fill="#fdd57a"/><rect x="1614.6" y="87.9" width="1" height="3.6" fill="#3b4453" opacity="0.75"/><rect x="1618.5" y="87.9" width="1" height="2.4" fill="#3b4453" opacity="0.75"/><rect x="1622.4" y="87.9" width="1" height="3.6" fill="#3b4453" opacity="0.75"/><rect x="1626.3" y="87.9" width="1" height="2.4" fill="#3b4453" opacity="0.75"/><rect x="1630.2" y="87.9" width="1" height="3.6" fill="#3b4453" opacity="0.75"/><rect x="1634.1" y="87.9" width="1" height="2.4" fill="#3b4453" opacity="0.75"/><rect x="1638.0" y="87.9" width="1" height="3.6" fill="#3b4453" opacity="0.75"/><rect x="1641.9" y="87.9" width="1" height="2.4" fill="#3b4453" opacity="0.75"/><rect x="1645.8" y="87.9" width="1" height="3.6" fill="#3b4453" opacity="0.75"/><path d="M1688.6 74L1680.4 79.4L1684.4 80.4L1681.4 84.6L1690 78.6L1685.6 77.8Z" fill="#fdc84a"/><rect x="1685" y="82" width="12.2" height="12" fill="#f2f2f2"/><path d="M1690 85H1695.6M1690 88H1695.6M1690 91H1695.6" stroke="#3f8fe0" stroke-width="1"/><path d="M1687.6 85H1688.8M1687.6 88H1688.8M1687.6 91H1688.8" stroke="#3f8fe0" stroke-width="1.1"/><path transform="translate(1677 80.4) scale(0.92)" d="M0 0V11.2L2.7 8.7L4.9 13.3L6.9 12.3L4.7 7.9L8.3 7.7Z" fill="#ffffff" stroke="#3b4453" stroke-width="0.7"/><rect x="1677.5" y="105.5" width="17.6" height="17.6" fill="none" stroke="#4fcf74" stroke-width="1" stroke-dasharray="2 1.2"/><rect x="1683" y="107.4" width="10" height="9.4" fill="#7ad69a"/><path d="M1679.4 111H1684.6V115.4H1689.4V121H1679.4Z" fill="#6fcf90"/><path d="M1683 111V116.8H1689.4" fill="none" stroke="#3b4453" stroke-width="0.8"/><path transform="translate(1688 113.4) scale(0.88)" d="M0 0V11.2L2.7 8.7L4.9 13.3L6.9 12.3L4.7 7.9L8.3 7.7Z" fill="#ffffff" stroke="#3b4453" stroke-width="0.7"/><rect x="1679.1" y="136" width="14.7" height="19.9" fill="#d8d8d8"/><rect x="1681.6" y="138.6" width="9.6" height="3.6" fill="#6a6e78"/><rect x="1681.6" y="144.6" width="2.4" height="2" fill="#6a6e78"/><rect x="1681.6" y="148.0" width="2.4" height="2" fill="#6a6e78"/><rect x="1681.6" y="151.4" width="2.4" height="2" fill="#6a6e78"/><rect x="1685.2" y="144.6" width="2.4" height="2" fill="#6a6e78"/><rect x="1685.2" y="148.0" width="2.4" height="2" fill="#6a6e78"/><rect x="1685.2" y="151.4" width="2.4" height="2" fill="#6a6e78"/><rect x="1688.8" y="144.6" width="2.4" height="2" fill="#6a6e78"/><rect x="1688.8" y="148.0" width="2.4" height="2" fill="#6a6e78"/><rect x="1688.8" y="151.4" width="2.4" height="2" fill="#6a6e78"/><rect x="1724" y="77" width="28" height="31" fill="#e0b074"/><path d="M1731 78.4V76.4H1734Q1734.6 73 1737.8 73Q1741 73 1741.6 76.4H1744.6V78.4Z" fill="#f6f6f6"/><path d="M1732.4 84.2H1748L1756.6 92.6V113.6H1732.4Z" fill="#3b4453"/><path d="M1733 84.8H1747.6L1756 93V113H1733Z" fill="#dcdcdc"/><path d="M1747.6 84.8L1756 93H1747.6Z" fill="#f4f4f4"/><rect x="1776" y="74" width="15.2" height="17.4" fill="#d4d4d4"/><path d="M1778.4 78H1788.4M1778.4 81.8H1788.4M1778.4 85.6H1786M1778.4 89H1784" stroke="#a2a5ab" stroke-width="1"/><path d="M1783.4 79.6L1785 79L1794 90L1792.4 91.2Z" fill="#ffffff" stroke="#3b4453" stroke-width="0.5"/><path d="M1796.2 81L1794.6 80.2L1786.4 90L1788 91.2Z" fill="#ffffff" stroke="#3b4453" stroke-width="0.5"/><circle cx="1787" cy="92.2" r="1.9" fill="#3b4453" stroke="#ffffff" stroke-width="1.1"/><circle cx="1793.6" cy="92.2" r="1.9" fill="#3b4453" stroke="#ffffff" stroke-width="1.1"/><path d="M1778 105H1785L1788 108V121H1778Z" fill="#e4e4e4"/><path d="M1781.2 107H1789.4L1794.8 112.2V125.6H1781.2Z" fill="#3b4453"/><path d="M1781.8 107.6H1789L1794.2 112.6V125H1781.8Z" fill="#dcdcdc"/><path d="M1789 107.6L1794.2 112.6H1789Z" fill="#f6f6f6"/><path d="M1838.8 77H1856.4V89.8H1879.2V107H1838.8Z" fill="#dcdcdc"/></svg>
<span class="t" style="left:35.00px;top:196.80px;font-size:15px;color:#e8e8e8;letter-spacing:-0.156px;">Start</span>
<span class="t" style="left:96.00px;top:196.80px;font-size:15px;color:#ffffff;letter-spacing:-0.250px;font-weight:700;">volumes*</span>
<svg class="i" style="left:173px;top:201px;" width="10" height="10" viewBox="0 0 10 10"><path d="M1 1L9 9M9 1L1 9" stroke="#b8bcc4" stroke-width="2" fill="none"/></svg>
<svg class="i" style="left:209px;top:198px;" width="16" height="16" viewBox="0 0 16 16"><path d="M8 0V16M0 8H16" stroke="#e8e8e8" stroke-width="2" fill="none"/></svg>
<span class="t" style="left:8.00px;top:231.08px;font-size:14.2px;color:#e0e2e6;letter-spacing:0.192px;">[−][OLE1][X-Ray]</span>
<svg class="i" style="left:1840px;top:234px" width="70" height="18"><path d="M2.5 11.5H14.5" stroke="#101318" stroke-width="5"/><path d="M3 11.5H14" stroke="#f2f2f2" stroke-width="3"/><rect x="27.5" y="5.5" width="9" height="9" fill="none" stroke="#f2f2f2" stroke-width="3"/><path d="M31 3.5H39.5V11" fill="none" stroke="#d0d0d0" stroke-width="1.5"/><path d="M53 3L64 14M64 3L53 14" stroke="#101318" stroke-width="4.5"/><path d="M53.5 3.5L63.5 13.5M63.5 3.5L53.5 13.5" stroke="#f2f2f2" stroke-width="3"/></svg>
<svg class="i" style="left:800px;top:400px" width="520" height="270" viewBox="800 400 520 270"><defs><linearGradient id="gG" x1="0" x2="1" y1="0" y2="0"><stop offset="0" stop-color="#5f9a5f"/><stop offset="0.35" stop-color="#4a8a4c"/><stop offset="1" stop-color="#2f6a38"/></linearGradient><linearGradient id="gR" x1="0" x2="0" y1="0" y2="1"><stop offset="0" stop-color="#d48686"/><stop offset="0.5" stop-color="#b86262"/><stop offset="1" stop-color="#8a4646"/></linearGradient><linearGradient id="gB" x1="0" x2="0" y1="0" y2="1"><stop offset="0" stop-color="#5c98e6"/><stop offset="0.5" stop-color="#3d76ca"/><stop offset="1" stop-color="#2a54a0"/></linearGradient></defs><path d="M927.5 500.5H1080L927.5 652.8L851.5 576.5Z" fill="#636618"/><path d="M927.5 500.5H1080L927.5 652.8L851.5 576.5ZM851.5 576.5H1003.8L927.5 500.5" fill="none" stroke="#f4f4e8" stroke-width="1.1" stroke-linejoin="round"/><path d="M965.4 414V489" stroke="#ffff00" stroke-width="1.2"/><g transform="translate(965.4 538) rotate(-16.2)"><rect x="2" y="-3" width="54" height="6" rx="2.6" fill="url(#gR)"/></g><path d="M962.4 490.6Q962.4 488 965.4 488Q968.6 488 968.6 490.6V538H962.4Z" fill="url(#gG)"/><ellipse cx="965.4" cy="489.8" rx="2.4" ry="1.3" fill="#8fc08f"/><g transform="translate(965.6 538.8) rotate(44.6)"><rect x="-3" y="-3.6" width="47.4" height="7.2" rx="3.4" fill="url(#gB)"/></g><path d="M963 469.5L970.5 477L978 470M970.5 477V484.5" fill="none" stroke="#1faa1f" stroke-width="1"/><path d="M1014.5 500.8L1029 515.2M1029 500.8L1014.5 515.2" fill="none" stroke="#e03434" stroke-width="0.9"/><path d="M993 549.6H1008L993 564.4H1008" fill="none" stroke="#2b84f0" stroke-width="1"/><path d="M1217.5 553V607.5M1217.5 614V640" stroke="#5fd45f" stroke-width="1.1"/><path d="M1187 621L1214.3 612.2M1220.7 610.1L1280 591" stroke="#e07070" stroke-width="1.1"/><path d="M1200.3 594.5L1214.3 607.8M1220.7 614L1253.7 645.5" stroke="#6a6ae4" stroke-width="1.1"/><rect x="1214.5" y="607.8" width="6" height="6" fill="none" stroke="#ffffff" stroke-width="1.1"/></svg>
<svg class="i" style="left:1760px;top:290px" width="155" height="165" viewBox="1760 290 155 165"><defs><radialGradient id="vg" cx="0.5" cy="0.5" r="0.5"><stop offset="0" stop-color="#8a8f98" stop-opacity="0.4"/><stop offset="1" stop-color="#8a8f98" stop-opacity="0"/></radialGradient><linearGradient id="vl" x1="0" x2="1" y1="0" y2="0"><stop offset="0" stop-color="#b0b3b8"/><stop offset="1" stop-color="#94979d"/></linearGradient></defs><path fill-rule="evenodd" fill="#444a55" d="M1770.2 364A64.2 40 0 1 0 1898.6 364A64.2 40 0 1 0 1770.2 364ZM1784.4 362A50.8 29.5 0 1 0 1886 362A50.8 29.5 0 1 0 1784.4 362Z"/><ellipse cx="1820" cy="322" rx="34" ry="30" fill="url(#vg)"/><path d="M1800.6 311.2L1841.9 299.4L1868.6 320.7L1824.5 334.1Z" fill="#b2b5ba"/><path d="M1800.6 311.2L1824.5 334.1L1824.5 375.8L1803.3 356.1Z" fill="url(#vl)"/><path d="M1824.5 334.1L1868.6 320.7L1867 360.8L1824.5 375.8Z" fill="#adb0b5"/><path d="M1824.5 334.1L1824.5 375.8M1824.5 334.1L1868.6 320.7" stroke="#5a5e66" stroke-width="0.8" stroke-dasharray="4 2.5" fill="none"/><path d="M1800.6 311.2L1824.5 334.1" stroke="#8a8d93" stroke-width="0.7" fill="none"/><rect x="1820.4" y="328.6" width="12.6" height="13.4" rx="3" fill="#bcc4d4" opacity="0.75"/><text transform="matrix(0.4410 -0.1340 0.0000 0.4170 1824.5 334.1)" x="50" y="63" font-size="25" font-family="Liberation Sans,sans-serif" font-weight="700" font-style="italic" text-anchor="middle" fill="#4a4e56" textLength="40" lengthAdjust="spacingAndGlyphs">TOP</text><text transform="matrix(-0.4410 0.1340 -0.2390 -0.2290 1868.6 320.7)" x="52" y="62" font-size="23" font-family="Liberation Sans,sans-serif" font-weight="700" font-style="italic" text-anchor="middle" fill="#4a4e56" textLength="56" lengthAdjust="spacingAndGlyphs">BACK</text><text transform="matrix(0.0000 -0.4170 -0.2120 -0.1970 1824.5 375.8)" x="48" y="60" font-size="19" font-family="Liberation Sans,sans-serif" font-weight="700" font-style="italic" text-anchor="middle" fill="#4a4e56" textLength="40" lengthAdjust="spacingAndGlyphs">LEFT</text><text x="1776.4" y="363.2" font-size="14" font-family="Liberation Sans,sans-serif" font-weight="700" font-style="italic" text-anchor="middle" fill="#c4c6c9" textLength="20" lengthAdjust="spacingAndGlyphs">W</text><text x="1893.4" y="363.2" font-size="14" font-family="Liberation Sans,sans-serif" font-weight="700" font-style="italic" text-anchor="middle" fill="#c4c6c9" textLength="13" lengthAdjust="spacingAndGlyphs">E</text><text x="1834" y="408" font-size="19.5" font-family="Liberation Sans,sans-serif" font-weight="700" text-anchor="middle" fill="#c4c6c9">S</text><rect x="1792.7" y="424.6" width="81" height="20.2" rx="4.5" fill="#8e92a2" stroke="#a4a8b6" stroke-width="1"/><path d="M1858.4 432.2H1868L1863.2 438Z" fill="none" stroke="#7a7e8c" stroke-width="1"/></svg>
<span class="t" style="left:1797.60px;top:424.12px;font-size:13.5px;color:#6c707e;letter-spacing:-0.683px;">Unnamed</span>
<svg class="i" style="left:1860px;top:470px" width="59" height="272" viewBox="1860 470 59 272"><rect x="1873.6" y="476.6" width="40.4" height="259" rx="3.5" fill="#1c222b"/><rect x="1873" y="476" width="40.2" height="258.8" rx="3.5" fill="#575c65" stroke="#4a4f58" stroke-width="0.8"/><circle cx="1906" cy="482.2" r="4.3" fill="#50555f"/><path d="M1903.8 480L1908.2 484.4M1908.2 480L1903.8 484.4" stroke="#666b74" stroke-width="1.1"/><path d="M1880 510.6Q1880 497.6 1893 497.6H1906V510.6Q1906 523.8 1893 523.8Q1880 523.8 1880 510.6Z" fill="#50555f" stroke="#454a54" stroke-width="1.8"/><circle cx="1893" cy="510.6" r="9" fill="none" stroke="#454a54" stroke-width="1.6"/><circle cx="1893" cy="509.4" r="5.6" fill="#4c515b" stroke="#454a54" stroke-width="1.4"/><path d="M1886 517.6L1889 514M1900 517.6L1897 514" stroke="#454a54" stroke-width="1.4"/><path d="M1890.4 534.8H1896.8L1893.6 538.2Z" fill="#454a54"/><path d="M1876.5 544.5H1910" stroke="#666b74" stroke-width="0.8"/><path transform="translate(1878 549.2)" d="M9.6 28Q8 23.5 2 18.5Q-0.5 16 1.8 14.8Q4.5 15 7.2 18.2L6.8 6Q7 3 9 3.2Q11 3.4 11.2 6L12 13L12.8 3Q13.2 0.2 15.4 0.4Q17.6 0.6 17.6 3.4L17.6 13L19.4 5Q20 2 22 2.4Q24 2.8 23.6 5.6L22.4 14L24.8 9Q26 6.4 27.6 7.2Q29 8 28 10.6Q26 17 24.5 21Q23 25 20.7 28Z" fill="#50555f" stroke="#454a54" stroke-width="1.8" stroke-linejoin="round"/><path d="M1880 586L1897 603M1896.6 586L1880 602.6" stroke="#454a54" stroke-width="1.8"/><path d="M1878 584H1884.4L1878 590.4ZM1898.6 584H1892.2L1898.6 590.4ZM1878 604.6H1884.4L1878 598.2Z" fill="#454a54"/><circle cx="1897.8" cy="602.8" r="5.6" fill="#5b6069" stroke="#454a54" stroke-width="1.8"/><path d="M1902.4 607.6L1907 612" stroke="#454a54" stroke-width="3" stroke-linecap="round"/><path d="M1890.4 621.8H1896.8L1893.6 625.2Z" fill="#454a54"/><path d="M1879.4 647.2A13.6 4.8 0 0 1 1906.4 647.2A13.6 4.8 0 0 1 1886 651.4" fill="none" stroke="#454a54" stroke-width="1.8"/><path d="M1881.6 651.6L1887.4 647V656.4Z" fill="#454a54"/><path d="M1893 631L1887.8 637.4H1890.6V657.6H1895.4V637.4H1898.2Z" fill="#5b6069" stroke="#454a54" stroke-width="1.5" stroke-linejoin="round"/><path d="M1890.4 668.6H1896.8L1893.6 672Z" fill="#454a54"/><path d="M1876.5 678.8H1910" stroke="#666b74" stroke-width="0.8"/><rect x="1878.8" y="683.8" width="7.2" height="7.2" rx="1" fill="#50555f" stroke="#454a54" stroke-width="1.4"/><rect x="1888.9" y="683.8" width="7.2" height="7.2" rx="1" fill="#50555f" stroke="#454a54" stroke-width="1.4"/><rect x="1899" y="683.8" width="7.2" height="7.2" rx="1" fill="#50555f" stroke="#454a54" stroke-width="1.4"/><rect x="1878.8" y="695" width="19.4" height="16" rx="1" fill="#50555f" stroke="#454a54" stroke-width="1.6"/><path d="M1884.4 698.2L1893.4 703L1884.4 707.8Z" fill="#454a54"/><circle cx="1906" cy="727.2" r="4.3" fill="#50555f" stroke="#454a54" stroke-width="0.8"/><path d="M1902.6 726.4H1909.4" stroke="#666b74" stroke-width="1"/><path d="M1903.4 728.2Q1906 731.4 1908.6 728.2Z" fill="#666b74"/></svg>
<div class="b" style="left:401px;top:797px;width:31px;height:143px;background:#2a313d;border-radius:3px 0 0 3px;"></div>
<div class="b" style="left:432px;top:797px;width:1085px;height:118px;background:#999a9c;border-radius:0 3px 0 0;"></div>
<div class="b" style="left:432px;top:914px;width:1084px;height:1px;background:#2e343e;"></div>
<div class="b" style="left:432px;top:915px;width:1085px;height:25px;background:#bfc0c2;border-radius:0 0 3px 0;"></div>
<span class="t m" style="left:435.30px;top:798.26px;font-size:13.7px;color:#1c1c1e;letter-spacing:0.753px;">Command: UCS</span>
<span class="t m" style="left:435.30px;top:817.26px;font-size:13.7px;color:#1c1c1e;letter-spacing:0.753px;">Current ucs name:  *WORLD*</span>
<span class="t m" style="left:435.30px;top:836.26px;font-size:13.7px;color:#1c1c1e;letter-spacing:0.753px;">Specify origin of UCS or [Face/NAmed/OBject/Previous/View/World/X/Y/Z/ZAxis] &lt;World&gt;: 3</span>
<span class="t m" style="left:435.30px;top:855.26px;font-size:13.7px;color:#1c1c1e;letter-spacing:0.753px;">Specify new origin point &lt;0,0,0&gt;:</span>
<span class="t m" style="left:435.30px;top:874.26px;font-size:13.7px;color:#1c1c1e;letter-spacing:0.753px;">Specify point on positive portion of X-axis &lt;1.750,0.433,0.000&gt;:</span>
<span class="t m" style="left:435.30px;top:893.26px;font-size:13.7px;color:#1c1c1e;letter-spacing:0.753px;">Specify point on positive-Y portion of the UCS XY plane &lt;0.250,1.299,0.000&gt;:</span>
<span class="t m" style="left:478.00px;top:917.26px;font-size:13.7px;color:#6a6a6c;letter-spacing:0.606px;font-style:italic;">Type a command</span>
<svg class="i" style="left:400px;top:797px;" width="34" height="70" viewBox="400 797 34 70"><rect x="406" y="802.0" width="1.6" height="1.6" fill="#c4ccd8"/><rect x="406" y="805.4" width="1.6" height="1.6" fill="#c4ccd8"/><rect x="409" y="802.0" width="1.6" height="1.6" fill="#c4ccd8"/><rect x="409" y="805.4" width="1.6" height="1.6" fill="#c4ccd8"/><rect x="412" y="802.0" width="1.6" height="1.6" fill="#c4ccd8"/><rect x="412" y="805.4" width="1.6" height="1.6" fill="#c4ccd8"/><rect x="415" y="802.0" width="1.6" height="1.6" fill="#c4ccd8"/><rect x="415" y="805.4" width="1.6" height="1.6" fill="#c4ccd8"/><rect x="418" y="802.0" width="1.6" height="1.6" fill="#c4ccd8"/><rect x="418" y="805.4" width="1.6" height="1.6" fill="#c4ccd8"/><rect x="421" y="802.0" width="1.6" height="1.6" fill="#c4ccd8"/><rect x="421" y="805.4" width="1.6" height="1.6" fill="#c4ccd8"/><rect x="424" y="802.0" width="1.6" height="1.6" fill="#c4ccd8"/><rect x="424" y="805.4" width="1.6" height="1.6" fill="#c4ccd8"/><rect x="427" y="802.0" width="1.6" height="1.6" fill="#c4ccd8"/><rect x="427" y="805.4" width="1.6" height="1.6" fill="#c4ccd8"/><path d="M409 818.6L419 828.4M419 818.6L409 828.4" stroke="#d8d8d8" stroke-width="2"/><path d="M407.6 860.6L417.4 851.4" stroke="#c8c8c8" stroke-width="2.6" stroke-linecap="round"/><path d="M416 850.6Q414.6 847 418 845.2L421.8 844.6L419.6 847.6L421 849.6L424.4 848.6Q424.2 852.4 420.6 853.6Q417.6 853.6 416 850.6Z" fill="#c8c8c8"/></svg>
<svg class="i" style="left:436px;top:918px;" width="76" height="18" viewBox="436 918 76 18"><rect x="437.7" y="919.7" width="18.6" height="13.6" fill="#c8c9cb" stroke="#7a7a7c" stroke-width="1"/><rect x="437.7" y="919.7" width="18.6" height="3.2" fill="#7a7a7c"/><path d="M440 925.4L443 927.4L440 929.4M444.4 930.4H448.6" fill="none" stroke="#5a5a5c" stroke-width="0.9"/><path d="M459.6 925H468.4L464 929.8Z" fill="#4a4a4c"/></svg>
<svg class="i" style="left:1500px;top:922px;" width="12" height="10" viewBox="1500 922 12 10"><path d="M1501.6 930.2H1510.2L1505.9 925Z" fill="#5a5a5c"/></svg>
<span class="t" style="left:35.50px;top:951.80px;font-size:15px;color:#ffffff;letter-spacing:0.031px;font-weight:700;">Model</span>
<span class="t" style="left:109.00px;top:951.80px;font-size:15px;color:#e8e8e8;letter-spacing:-0.625px;">a3</span>
<svg class="i" style="left:157px;top:953px;" width="16" height="16" viewBox="0 0 16 16"><path d="M8 0V16M0 8H16" stroke="#e0e0e0" stroke-width="2" fill="none"/></svg>
<span class="t" style="left:1177.00px;top:988.66px;font-size:15.4px;color:#f0f0f0;letter-spacing:-1.156px;">MODEL</span>
<span class="t" style="left:1626.40px;top:988.80px;font-size:15px;color:#f4f4f4;transform:scaleX(0.78);transform-origin:0 0;">1:1</span>
<svg class="i" style="left:1299px;top:995px;" width="10" height="5" viewBox="0 0 10 5"><path d="M0 0H10L5.0 5Z" fill="#e0e0e0"/></svg>
<svg class="i" style="left:1382px;top:995px;" width="10" height="5" viewBox="0 0 10 5"><path d="M0 0H10L5.0 5Z" fill="#e0e0e0"/></svg>
<svg class="i" style="left:1432px;top:995px;" width="10" height="5" viewBox="0 0 10 5"><path d="M0 0H10L5.0 5Z" fill="#e0e0e0"/></svg>
<svg class="i" style="left:1513px;top:995px;" width="10" height="5" viewBox="0 0 10 5"><path d="M0 0H10L5.0 5Z" fill="#e0e0e0"/></svg>
<svg class="i" style="left:1648px;top:995px;" width="10" height="5" viewBox="0 0 10 5"><path d="M0 0H10L5.0 5Z" fill="#e0e0e0"/></svg>
<svg class="i" style="left:1701px;top:995px;" width="10" height="5" viewBox="0 0 10 5"><path d="M0 0H10L5.0 5Z" fill="#e0e0e0"/></svg>
<svg class="i" style="left:1230px;top:983px" width="689" height="30" viewBox="1230 983 689 30"><path d="M1243.4 988.2V1007M1248.4 988.2V1007M1253.4 988.2V1007M1239 992.6H1258M1239 997.6H1258M1239 1002.6H1258" stroke="#e6e6e6" stroke-width="1.1" fill="none"/><rect x="1271.4" y="990.4" width="2.6" height="2.6" fill="#e0e0e0"/><rect x="1271.4" y="995.9" width="2.6" height="2.6" fill="#e0e0e0"/><rect x="1271.4" y="1001.4" width="2.6" height="2.6" fill="#e0e0e0"/><rect x="1277.2" y="990.4" width="2.6" height="2.6" fill="#e0e0e0"/><rect x="1277.2" y="995.9" width="2.6" height="2.6" fill="#e0e0e0"/><rect x="1277.2" y="1001.4" width="2.6" height="2.6" fill="#e0e0e0"/><rect x="1283.0" y="990.4" width="2.6" height="2.6" fill="#e0e0e0"/><rect x="1283.0" y="995.9" width="2.6" height="2.6" fill="#e0e0e0"/><rect x="1283.0" y="1001.4" width="2.6" height="2.6" fill="#e0e0e0"/><path d="M1322.8 988.2V1007.2H1342M1322.8 1001.6H1328.4V1007.2" fill="none" stroke="#e6e6e6" stroke-width="1.1"/><circle cx="1360" cy="998.3" r="7.6" fill="none" stroke="#e6e6e6" stroke-width="1.1"/><path d="M1369 989.4L1360 998.3H1371.6" fill="none" stroke="#e6e6e6" stroke-width="1.1"/><path d="M1412.3 988V1006.4" stroke="#3fd06a" stroke-width="1.2"/><path d="M1404.6 989L1419.6 1004.6" stroke="#e05a5a" stroke-width="1.1"/><rect x="1410.8" y="995.4" width="3" height="3" fill="#3b4453" stroke="#ffffff" stroke-width="0.8"/><path d="M1453 1004.8H1473" stroke="#a8acb4" stroke-width="1.6"/><path d="M1453.4 1004.4L1468 990" stroke="#e6e6e6" stroke-width="1.1"/><rect x="1459" y="996" width="3.2" height="3.2" fill="#e8e8e8"/><rect x="1485.6" y="991" width="17" height="16.2" fill="none" stroke="#ffffff" stroke-width="1.2"/><rect x="1483.2" y="988.6" width="4.8" height="4.8" fill="#5b8ec6" stroke="#ffffff" stroke-width="1"/><path d="M1545 988.4C1546.6 993 1547.6 997 1549 1000L1554 1007.6L1548 1004.6Q1546.2 1003.4 1545 1001.6Q1543.8 1003.4 1542 1004.6L1536 1007.6L1541 1000C1542.4 997 1543.4 993 1545 988.4Z" fill="#ffffff"/><circle cx="1552.8" cy="992.2" r="3" fill="none" stroke="#ffffff" stroke-width="1"/><path d="M1575.4 988.4C1577.0 993 1578.0 997 1579.4 1000L1584.4 1007.6L1578.4 1004.6Q1576.6000000000001 1003.4 1575.4 1001.6Q1574.2 1003.4 1572.4 1004.6L1566.4 1007.6L1571.4 1000C1572.8000000000002 997 1573.8000000000002 993 1575.4 988.4Z" fill="#d4d4d4"/><path d="M1584.6 988L1580.4 993H1582.8L1580.6 997.6L1585.6 991.8H1583Z" fill="#d4d4d4"/><path d="M1605.5 988.4C1607.1 993 1608.1 997 1609.5 1000L1614.5 1007.6L1608.5 1004.6Q1606.7 1003.4 1605.5 1001.6Q1604.3 1003.4 1602.5 1004.6L1596.5 1007.6L1601.5 1000C1602.9 997 1603.9 993 1605.5 988.4Z" fill="#d4d4d4"/><rect x="-2.1" y="-10" width="4.2" height="5" fill="#dcdcdc" transform="translate(1680.8 997.9) rotate(0)"/><rect x="-2.1" y="-10" width="4.2" height="5" fill="#dcdcdc" transform="translate(1680.8 997.9) rotate(45)"/><rect x="-2.1" y="-10" width="4.2" height="5" fill="#dcdcdc" transform="translate(1680.8 997.9) rotate(90)"/><rect x="-2.1" y="-10" width="4.2" height="5" fill="#dcdcdc" transform="translate(1680.8 997.9) rotate(135)"/><rect x="-2.1" y="-10" width="4.2" height="5" fill="#dcdcdc" transform="translate(1680.8 997.9) rotate(180)"/><rect x="-2.1" y="-10" width="4.2" height="5" fill="#dcdcdc" transform="translate(1680.8 997.9) rotate(225)"/><rect x="-2.1" y="-10" width="4.2" height="5" fill="#dcdcdc" transform="translate(1680.8 997.9) rotate(270)"/><rect x="-2.1" y="-10" width="4.2" height="5" fill="#dcdcdc" transform="translate(1680.8 997.9) rotate(315)"/><circle cx="1680.8" cy="997.9" r="7.6" fill="#dcdcdc"/><circle cx="1680.8" cy="997.9" r="3.2" fill="#3b4453"/><path d="M1731.4 988V1007.2M1721.8 997.6H1741" stroke="#e8e8e8" stroke-width="3" fill="none"/><rect x="1755.6" y="989" width="6.8" height="6.4" fill="none" stroke="#e6e6e6" stroke-width="1"/><circle cx="1770.3" cy="996.8" r="3.9" fill="none" stroke="#e6e6e6" stroke-width="1"/><path d="M1758.6 1007L1762.8 1000.6L1767 1007Z" fill="none" stroke="#e6e6e6" stroke-width="1"/><path d="M1787 985.4H1801.6L1807.2 989.6V1000L1802 1003H1787Z" fill="#2f6bb4"/><path d="M1801.6 985.4L1807.2 989.6H1801.6Z" fill="#7fa8d8"/><path d="M1792.3 985.4V1000M1787 990H1799" stroke="#ffffff" stroke-width="1.4"/><circle cx="1792.3" cy="990" r="2.4" fill="#2f6bb4" stroke="#ffffff" stroke-width="1.2"/><path d="M1787 999.6Q1792 998.6 1797.4 999.8L1796 1003L1797.4 1006.8H1787Z" fill="#f5b820"/><path d="M1797.6 1003.8L1802 1008.2L1811 999" fill="none" stroke="#3fb54a" stroke-width="2.8"/><path d="M1825.4 992.6A8 8 0 1 1 1839.4 1000.4" fill="none" stroke="#e0e0e0" stroke-width="1.5"/><path d="M1822.6 990.4L1829.2 991.4L1824.8 996.6Z" fill="#e0e0e0"/><path d="M1832.6 990.6V996.8H1836.4" fill="none" stroke="#e0e0e0" stroke-width="1.3"/><path d="M1821 996H1828L1831 999V1008H1821Z" fill="#ffffff"/><path d="M1822 997H1827.6L1830 999.4V1003.6Q1826 1002 1822 1003.4Z" fill="#2f6bb4"/><path d="M1822 1003.6Q1826 1002.2 1830 1004V1007H1822Z" fill="#f5b820"/><path d="M1824 997V1002M1822 999H1826" stroke="#ffffff" stroke-width="0.7"/><circle cx="1836.5" cy="1003.7" r="4.5" fill="#4fa8e8"/><rect x="1835.9" y="1002.6" width="1.3" height="3.6" fill="#ffffff"/><rect x="1835.9" y="1000.6" width="1.3" height="1.3" fill="#ffffff"/><rect x="1859.4" y="990.2" width="19.4" height="14.4" fill="none" stroke="#e6e6e6" stroke-width="1.1"/><path d="M1872 992.4H1876.6V997ZM1861.6 1002.4V997.8L1866.2 1002.4Z" fill="#e6e6e6"/><path d="M1872.4 996.6L1875.6 993.4M1865.8 998.6L1862.6 1001.6" stroke="#e6e6e6" stroke-width="1.1"/><rect x="1889" y="989" width="20" height="2.4" fill="#e6e6e6"/><rect x="1889" y="996.2" width="20" height="2.6" fill="#e6e6e6"/><rect x="1889" y="1003.6" width="20" height="2.4" fill="#e6e6e6"/></svg>
</div>
</body>
</html>
